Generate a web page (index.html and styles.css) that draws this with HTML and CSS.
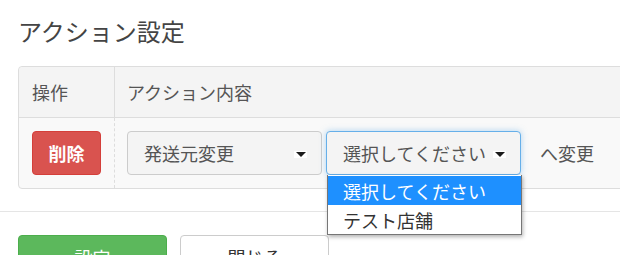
FILE: index.html
```html
<!DOCTYPE html>
<html lang="ja">
<head>
<meta charset="utf-8">
<title>アクション設定</title>
<link rel="stylesheet" href="styles.css">
</head>
<body>
<div class="modal">
  <div class="modal-body">
    <h2 class="title">アクション設定</h2>
    <div class="table">
      <div class="row head">
        <div class="cell op">操作</div>
        <div class="cell content">アクション内容</div>
      </div>
      <div class="row body-row">
        <div class="cell op"><button class="btn btn-danger">削除</button></div>
        <div class="cell content">
          <div class="select"><span class="label">発送元変更</span><span class="caret"><svg width="10" height="5" viewBox="0 0 10 5"><path d="M0 0H10L5 5Z" fill="#1a1a1a"/></svg></span></div>
          <div class="select focus"><span class="label">選択してください</span><span class="caret"><svg width="10" height="5" viewBox="0 0 10 5"><path d="M0 0H10L5 5Z" fill="#1a1a1a"/></svg></span>
            <ul class="dropdown">
              <li class="opt active">選択してください</li>
              <li class="opt">テスト店舗</li>
            </ul>
          </div>
          <span class="suffix">へ変更</span>
        </div>
      </div>
    </div>
  </div>
  <hr class="divider">
  <div class="modal-footer">
    <button class="btn btn-success">設定</button>
    <button class="btn btn-default">閉じる</button>
  </div>
</div>
</body>
</html>
```
FILE: styles.css
```css
html, body {
  margin: 0;
  padding: 0;
  overflow: hidden;
  background: #fff;
}
body {
  font-family: "Noto Sans CJK JP", "Noto Sans", sans-serif;
  color: #555;
  font-size: 18px;
}
.modal-body {
  padding: 14px 0 0 18px;
}
.title {
  margin: 0 0 18px 0;
  font-size: 24px;
  line-height: 34px;
  font-weight: normal;
  color: #444;
}
.table {
  width: 680px;
  border: 1px solid #ddd;
  border-radius: 4px;
  background: #f9f9f9;
}
.row {
  display: flex;
}
.head {
  background: #f4f4f4;
  height: 50px;
  border-bottom: 1px solid #ddd;
  border-radius: 4px 4px 0 0;
}
.head .cell {
  display: flex;
  align-items: center;
}
.cell.op {
  width: 96px;
  padding-left: 13px;
  box-sizing: border-box;
  border-right: 1px solid #ddd;
}
.body-row .cell.op {
  border-right: 1px dashed #ddd;
}
.cell.content {
  padding-left: 12px;
  flex: 1;
}
.body-row {
  height: 70px;
}
.body-row .cell {
  display: flex;
  align-items: center;
}
.btn {
  font-family: inherit;
  font-size: 18px;
  border-radius: 4px;
  height: 44px;
  box-sizing: border-box;
  cursor: pointer;
}
.btn-danger {
  width: 69px;
  padding: 0;
  background: #d9534f;
  border: 1px solid #d43f3a;
  color: #fff;
  font-weight: bold;
}
.select {
  position: relative;
  width: 195px;
  height: 44px;
  box-sizing: border-box;
  border: 1px solid #ccc;
  border-radius: 4px;
  background: #f4f4f4;
  display: flex;
  align-items: center;
  justify-content: space-between;
  padding: 0 14px 0 16px;
  margin-right: 4px;
  color: #555;
}
.select.focus {
  border-color: #66afe9;
  box-shadow: 0 0 6px rgba(102, 175, 233, 0.5);
}
.caret {
  width: 13px;
  height: 7px;
  background: #fff;
  display: flex;
  align-items: center;
  justify-content: center;
  margin-top: 3px;
}
.caret svg {
  display: block;
}
.suffix {
  margin-left: 15px;
}
.dropdown {
  position: absolute;
  top: calc(100% + 1px);
  left: 0;
  width: 195px;
  margin: 0;
  padding: 1px 0 0 0;
  list-style: none;
  background: #fff;
  border: 1px solid #767676;
  border-top: none;
  box-sizing: border-box;
  box-shadow: 1px 2px 4px rgba(0, 0, 0, 0.3);
  z-index: 10;
}
.opt {
  height: 29px;
  line-height: 30px;
  padding-left: 15px;
  color: #333;
}
.opt.active {
  background: #1e90ff;
  color: #fff;
}
.divider {
  margin: 22px 0 0 0;
  border: none;
  border-top: 1px solid #e5e5e5;
  height: 0;
}
.modal-footer {
  padding: 23px 18px;
  display: flex;
  gap: 13px;
}
.btn-success {
  width: 149px;
  background: #5cb85c;
  border: 1px solid #4cae4c;
  color: #fff;
}
.btn-default {
  width: 149px;
  background: #fff;
  border: 1px solid #ccc;
  color: #333;
}
```
